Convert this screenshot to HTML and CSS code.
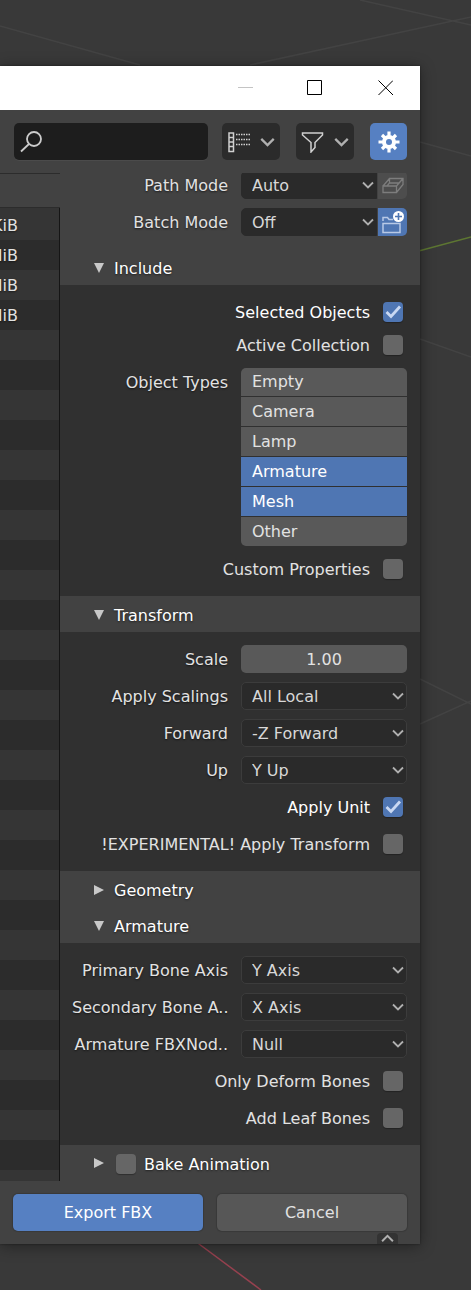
FILE: index.html
```html
<!DOCTYPE html>
<html lang="en">
<head>
<meta charset="utf-8">
<meta name="viewport" content="width=device-width, initial-scale=1">
<title>Export FBX</title>
<link rel="stylesheet" href="styles.css">
</head>
<body>
<svg class="viewport" viewBox="0 0 471 1290" preserveAspectRatio="xMidYMin slice" aria-hidden="true">
  <path class="grid-line" d="M0 26L140 65M360 0L471 25M250 65L471 17M420 142L471 156M420 339L471 357M420 679L471 704M420 724L471 701"/>
  <path class="axis-y" d="M415 252L471 237"/>
  <path class="axis-x" d="M195 1241L261 1290"/>
</svg>
<svg class="defs" aria-hidden="true">
  <symbol id="chevron" viewBox="0 0 12 8"><path d="M1 1.5L6 6.5L11 1.5"/></symbol>
  <symbol id="tick" viewBox="0 0 20 20"><path d="M3.500 10L8 14.500L17 4.500"/></symbol>
  <symbol id="open" viewBox="0 0 10 10"><path d="M0 0H10L5 10Z"/></symbol>
  <symbol id="closed" viewBox="0 0 10 10"><path d="M0 0V10L10 5Z"/></symbol>
</svg>

<main class="window">
  <header class="titlebar">
    <button type="button" aria-label="Minimize" disabled><svg width="16" height="16" viewBox="0 0 16 16"><path d="M1 7.500H16" stroke="#c4c4c4"/></svg></button>
    <button type="button" aria-label="Maximize"><svg width="16" height="16" viewBox="0 0 16 16"><path d="M.5 .5H14.500V14.500H.5Z" stroke="#000"/></svg></button>
    <button type="button" aria-label="Close"><svg width="16" height="16" viewBox="0 0 16 16"><path d="M1.500 .5L16 15M16 .5L1.500 15" stroke="#000"/></svg></button>
  </header>

  <div class="toolbar">
    <label class="search">
      <svg width="24" height="24" viewBox="0 0 24 24" aria-hidden="true"><circle cx="15" cy="9" r="7"/><path d="M10 14L2 21.500"/></svg>
      <input type="search" aria-label="Search files">
    </label>
    <div class="tools">
      <button type="button" class="tool" aria-label="Display settings">
        <svg width="23" height="22" viewBox="0 0 23 22"><path d="M2 2H6.500V20.500H2ZM2 6.500H6.500M2 11H6.500M2 15.500H6.500"/><path d="M9 3.500H23M9 8.500H23M9 13.500H23" stroke-dasharray="1.500 1"/></svg>
        <svg class="chevron" width="15" height="10"><use href="#chevron"/></svg>
      </button>
      <button type="button" class="tool" aria-label="Filter">
        <svg width="23" height="22" viewBox="0 0 23 22"><path d="M1.500 2H21.500V4L14 11.500V16.500L10 21V11.500L1.500 4Z"/></svg>
        <svg class="chevron" width="15" height="10"><use href="#chevron"/></svg>
      </button>
      <button type="button" class="tool tool-active" aria-label="Toggle options" aria-pressed="true">
        <svg width="22" height="22" viewBox="-11 -11 22 22"><path class="teeth" d="M0-10.500V10.500M-10.500 0H10.500M-7-7L7 7M7-7L-7 7"/><circle class="cog" r="7"/><circle class="hole" r="3"/></svg>
      </button>
    </div>
  </div>

  <div class="content">
    <section class="files" aria-label="Files">
      <div class="files-head"></div>
      <ul class="files-list"><li>KiB</li><li>MiB</li><li>MiB</li><li>MiB</li></ul>
    </section>

    <form class="panel" id="options">
      <div class="group group-top">
        <div class="row">
          <label for="path">Path Mode</label>
          <div class="field joined">
            <div class="select"><select id="path"><option>Auto</option></select><svg class="chevron" width="12" height="8"><use href="#chevron"/></svg></div>
            <button type="button" class="side" aria-label="Embed textures" disabled><svg width="22" height="18" viewBox="0 0 22 18"><path d="M1 10H14.500V16.500H1ZM1 10L7.500 2.500H21V8.500L14.500 16.500M14.500 10L21 2.500M7.500 2.500V7L5 10M7.500 7H17"/></svg></button>
          </div>
        </div>
        <div class="row">
          <label for="batch">Batch Mode</label>
          <div class="field joined">
            <div class="select"><select id="batch"><option>Off</option></select><svg class="chevron" width="12" height="8"><use href="#chevron"/></svg></div>
            <button type="button" class="side side-on" aria-label="Batch own directory" aria-pressed="true"><svg width="24" height="24" viewBox="0 0 24 24"><path d="M2 13.500H19V22.500H2ZM2 11V7.500H6.500L8 9.500H12"/><circle cx="17.500" cy="6.500" r="5.500"/><path class="plus" d="M17.500 3V10M14 6.500H21"/></svg></button>
          </div>
        </div>
      </div>

      <button type="button" class="heading" aria-expanded="true"><svg class="arrow" width="10" height="10"><use href="#open"/></svg>Include</button>
      <div class="group">
        <div class="checks">
          <label class="check on"><span class="text">Selected Objects</span><span class="box"><input type="checkbox" checked><svg width="20" height="20"><use href="#tick"/></svg></span></label>
          <label class="check"><span class="text">Active Collection</span><span class="box"><input type="checkbox"><svg width="20" height="20"><use href="#tick"/></svg></span></label>
        </div>
        <div class="row row-list">
          <span class="label" id="types">Object Types</span>
          <div class="list" role="group" aria-labelledby="types">
            <button type="button" aria-pressed="false">Empty</button>
            <button type="button" aria-pressed="false">Camera</button>
            <button type="button" aria-pressed="false">Lamp</button>
            <button type="button" aria-pressed="true">Armature</button>
            <button type="button" aria-pressed="true">Mesh</button>
            <button type="button" aria-pressed="false">Other</button>
          </div>
        </div>
        <label class="check"><span class="text">Custom Properties</span><span class="box"><input type="checkbox"><svg width="20" height="20"><use href="#tick"/></svg></span></label>
      </div>

      <button type="button" class="heading" aria-expanded="true"><svg class="arrow" width="10" height="10"><use href="#open"/></svg>Transform</button>
      <div class="group">
        <div class="row"><label for="scale">Scale</label><input class="number" id="scale" type="text" inputmode="decimal" value="1.00"></div>
        <div class="row"><label for="scalings">Apply Scalings</label><div class="select"><select id="scalings"><option>All Local</option></select><svg class="chevron" width="12" height="8"><use href="#chevron"/></svg></div></div>
        <div class="row"><label for="forward">Forward</label><div class="select"><select id="forward"><option>-Z Forward</option></select><svg class="chevron" width="12" height="8"><use href="#chevron"/></svg></div></div>
        <div class="row"><label for="up">Up</label><div class="select"><select id="up"><option>Y Up</option></select><svg class="chevron" width="12" height="8"><use href="#chevron"/></svg></div></div>
        <label class="check on"><span class="text">Apply Unit</span><span class="box"><input type="checkbox" checked><svg width="20" height="20"><use href="#tick"/></svg></span></label>
        <label class="check"><span class="text">!EXPERIMENTAL! Apply Transform</span><span class="box"><input type="checkbox"><svg width="20" height="20"><use href="#tick"/></svg></span></label>
      </div>

      <button type="button" class="heading" aria-expanded="false"><svg class="arrow" width="10" height="10"><use href="#closed"/></svg>Geometry</button>
      <button type="button" class="heading" aria-expanded="true"><svg class="arrow" width="10" height="10"><use href="#open"/></svg>Armature</button>
      <div class="group">
        <div class="row"><label for="primary">Primary Bone Axis</label><div class="select"><select id="primary"><option>Y Axis</option></select><svg class="chevron" width="12" height="8"><use href="#chevron"/></svg></div></div>
        <div class="row"><label for="secondary">Secondary Bone A..</label><div class="select"><select id="secondary"><option>X Axis</option></select><svg class="chevron" width="12" height="8"><use href="#chevron"/></svg></div></div>
        <div class="row"><label for="node">Armature FBXNod..</label><div class="select"><select id="node"><option>Null</option></select><svg class="chevron" width="12" height="8"><use href="#chevron"/></svg></div></div>
        <label class="check"><span class="text">Only Deform Bones</span><span class="box"><input type="checkbox"><svg width="20" height="20"><use href="#tick"/></svg></span></label>
        <label class="check"><span class="text">Add Leaf Bones</span><span class="box"><input type="checkbox"><svg width="20" height="20"><use href="#tick"/></svg></span></label>
      </div>

      <div class="heading heading-check">
        <svg class="arrow" width="10" height="10"><use href="#closed"/></svg>
        <label class="bake"><span class="box"><input type="checkbox"><svg width="20" height="20"><use href="#tick"/></svg></span><span class="text">Bake Animation</span></label>
      </div>
    </form>
  </div>

  <footer class="footer">
    <button type="submit" form="options" class="action primary">Export FBX</button>
    <button type="button" class="action">Cancel</button>
    <button type="button" class="region-tab" aria-label="Show region"><svg class="chevron" width="13" height="9" viewBox="0 0 12 8"><path d="M1 6.500L6 1.500L11 6.500"/></svg></button>
  </footer>
</main>
</body>
</html>
```

FILE: styles.css
```css
* { box-sizing: border-box; }

body {
  margin: 0;
  min-height: 100vh;
  position: relative;
  overflow-x: hidden;
  background: #393939;
  color: #e2e2e2;
  font: 16px/20px "DejaVu Sans", sans-serif;
}

button, input, select {
  margin: 0;
  padding: 0;
  border: 0;
  font: inherit;
  color: inherit;
  background: none;
  appearance: none;
}

svg { display: block; fill: none; flex: none; }

.defs { position: absolute; width: 0; height: 0; }

.viewport {
  position: absolute;
  inset: 0;
  width: 100%;
  height: 100%;
}
.grid-line { stroke: #434343; stroke-width: 1.5; }
.axis-y { stroke: #5d7632; stroke-width: 1.5; }
.axis-x { stroke: #96414f; stroke-width: 1.5; }

.window {
  position: relative;
  display: flex;
  flex-direction: column;
  margin: 66px 51px 46px 0;
  background: #424242;
  box-shadow: 0 2px 14px rgba(0, 0, 0, .4), 0 0 2px rgba(0, 0, 0, .4);
}

.titlebar {
  display: flex;
  justify-content: flex-end;
  height: 44px;
  background: #fff;
}
.titlebar button {
  display: grid;
  place-items: center;
  width: 70px;
}

.toolbar {
  display: flex;
  gap: 14px;
  padding: 13px 13px 13px 14px;
}
.search {
  flex: 1;
  min-width: 0;
  display: flex;
  align-items: center;
  gap: 6px;
  padding: 0 6px 0 5px;
  height: 37px;
  border-radius: 5px;
  background: #1d1d1d;
  box-shadow: 0 1px 0 #4b4b4b;
}
.search svg { stroke: #ccc; stroke-width: 1.8; }
.search input { flex: 1; min-width: 0; outline: 0; }

.tools { display: flex; gap: 16px; }
.tool {
  display: flex;
  align-items: center;
  justify-content: space-between;
  width: 58px;
  height: 37px;
  padding: 0 5px;
  border-radius: 5px;
  background: #2b2b2b;
}
.tool svg { stroke: #d0d0d0; stroke-width: 1.5; }
.tool-active {
  justify-content: center;
  width: 37px;
  background: #5680c2;
}
.tool .teeth { stroke: #fff; stroke-width: 3.2; }
.cog { fill: #fff; stroke: none; }
.hole { fill: #5680c2; stroke: none; }

.chevron, .tool .chevron { stroke: #b0b0b0; stroke-width: 1.8; }

.content { display: flex; }

.files {
  flex: none;
  display: flex;
  flex-direction: column;
  width: 60px;
}
.files-head {
  height: 35px;
  border-top: 1px solid #2c2c2c;
  border-bottom: 1px solid #2c2c2c;
}
.files-list {
  flex: 1;
  margin: 0;
  padding: 2px 0 0;
  list-style: none;
  overflow: hidden;
  border-right: 1px solid #151515;
  background: repeating-linear-gradient(#353535 0 30px, #2c2c2c 30px 60px) 0 2px #353535;
}
.files-list li {
  display: flex;
  justify-content: flex-end;
  height: 30px;
  padding-right: 41px;
  line-height: 32px;
  text-shadow: 0 1px 2px rgba(0, 0, 0, .5);
}

.panel {
  flex: 1;
  min-width: 0;
  overflow: hidden;
}
.group {
  display: flex;
  flex-direction: column;
  gap: 9px;
  padding: 13px 13px 13px 12px;
  background: #303030;
}
.group-top {
  margin-top: -2px;
  padding-top: 0;
  background: none;
}
.row {
  display: grid;
  grid-template-columns: 156fr 166fr;
  gap: 13px;
  align-items: center;
  min-height: 28px;
}
.row > label, .label {
  min-width: 0;
  padding-top: 2px;
  text-align: right;
  white-space: nowrap;
  text-shadow: 0 1px 2px rgba(0, 0, 0, .6);
}
.row-list { align-items: start; }
.row-list .label { padding-top: 1px; line-height: 28px; }

.select { display: grid; align-items: center; min-width: 0; }
.select > * { grid-area: 1 / 1; }
.select select {
  width: 100%;
  height: 28px;
  padding: 2px 20px 0 10px;
  border: 1px solid #3c3c3c;
  border-radius: 5px;
  background: #2a2a2a;
  color: #d8d8d8;
}
.select .chevron {
  justify-self: end;
  margin-right: 3px;
  pointer-events: none;
}
.joined {
  display: grid;
  grid-template-columns: 1fr 29px;
  gap: 1px;
}
.joined select { border-color: #2a2a2a; border-radius: 5px 0 0 5px; }
.side {
  display: grid;
  place-items: center;
  height: 28px;
  border-radius: 0 5px 5px 0;
  background: #4d4d4d;
}
.side svg { stroke: #7d7d7d; stroke-width: 1.3; }
.side-on { background: #4f76b3; }
.side-on svg { stroke: #b8c9e6; stroke-width: 1.5; }
.side-on circle { fill: #fff; stroke: none; }
.side-on .plus { stroke: #4f76b3; stroke-width: 1.6; }

.number {
  width: 100%;
  height: 28px;
  border-radius: 5px;
  background: #595959;
  text-align: center;
}

.list {
  display: grid;
  gap: 1px;
  overflow: hidden;
  border-radius: 5px;
}
.list button {
  height: 29px;
  padding: 0 11px;
  background: #595959;
  text-align: left;
}
.list button:first-child { height: 28px; }
.list button[aria-pressed="true"] { background: #4f76b3; color: #fff; }

.checks { display: grid; gap: 5px; }
.check {
  display: flex;
  align-items: center;
  justify-content: flex-end;
  gap: 13px;
  height: 28px;
  padding-right: 4px;
  white-space: nowrap;
}
.text { padding-top: 2px; }
.on { color: #fff; }
.box { display: grid; flex: none; }
.box > * { grid-area: 1 / 1; }
.box input {
  width: 20px;
  height: 20px;
  border-radius: 4px;
  background: #666;
  box-shadow: 0 1px 1px rgba(0, 0, 0, .3);
}
.box svg {
  visibility: hidden;
  stroke: #c9d8f2;
  stroke-width: 2.8;
  pointer-events: none;
}
.box input:checked { background: #4f76b3; }
.box input:checked + svg { visibility: visible; }

.heading {
  display: flex;
  align-items: center;
  gap: 10px;
  width: 100%;
  height: 36px;
  padding: 3px 0 0 34px;
  background: #424242;
  color: #fff;
  text-shadow: 0 1px 2px rgba(0, 0, 0, .5);
}
.arrow { fill: #c8c8c8; margin-bottom: 2px; }
.heading-check { gap: 12px; padding-top: 1px; }
.bake { display: flex; align-items: center; gap: 8px; }

.footer {
  position: relative;
  display: grid;
  grid-template-columns: 1fr 1fr;
  gap: 14px;
  padding: 13px;
}
.action {
  height: 37px;
  border-radius: 5px;
  background: #575757;
  box-shadow: 0 0 1px 1px rgba(0, 0, 0, .15);
}
.primary { background: #5680c2; color: #fff; }
.region-tab {
  position: absolute;
  right: 22px;
  bottom: 0;
  display: grid;
  place-items: center;
  width: 21px;
  height: 11px;
  border-radius: 4px 4px 0 0;
  background: #333;
}
```
